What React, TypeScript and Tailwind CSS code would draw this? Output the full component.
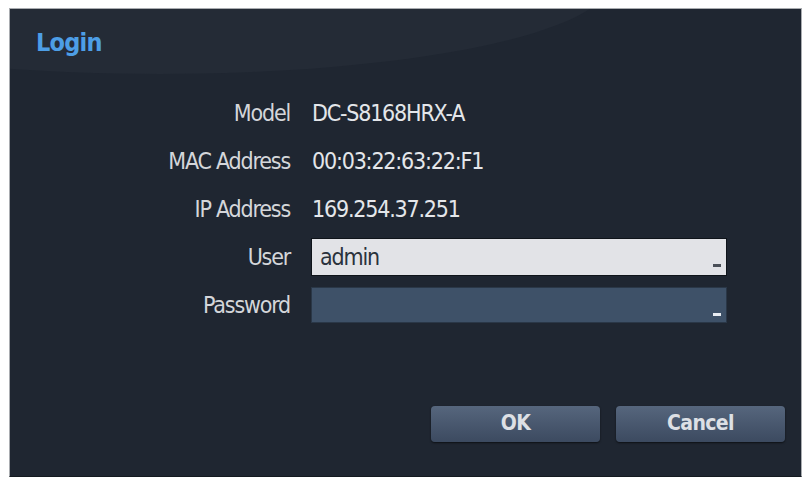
import React from "react";

const font = {
  fontFamily: '"Liberation Sans Narrow", "DejaVu Sans Condensed", "Liberation Sans", sans-serif',
};

function InfoRow({ label, value }: { label: string; value: string }) {
  return (
    <div className="flex h-[48px] items-center">
      <div className="w-[281px] pr-px text-right text-[23px] tracking-[-1.2px] text-[#d4d6da]">{label}</div>
      <div className="pl-[21px] text-[23px] tracking-[-1.2px] text-[#e4e6ea]">{value}</div>
    </div>
  );
}

function Field({ label, value, light }: { label: string; value?: string; light?: boolean }) {
  return (
    <div className="flex h-[48px] items-center">
      <div className="w-[281px] pr-px text-right text-[23px] tracking-[-1.2px] text-[#d4d6da]">{label}</div>
      <div className="pl-[20px]">
        <div
          className={
            light
              ? "relative flex h-[38px] w-[416px] items-center border border-[#0f141a] bg-[#e2e3e7] px-[8px] text-[23px] tracking-[-1.2px] text-[#2a323c]"
              : "relative flex h-[36px] w-[416px] items-center border border-[#2a3747] bg-[#3e5168] px-[8px] text-[23px] tracking-[-1.2px] text-[#e4e6ea]"
          }
        >
          {value}
          <span
            className={
              light
                ? "absolute bottom-[8px] right-[5px] h-[3px] w-[8px] bg-[#4a4f58]"
                : "absolute bottom-[6px] right-[5px] h-[3px] w-[8px] bg-[#e8ecf2]"
            }
          />
        </div>
      </div>
    </div>
  );
}

export default function App() {
  return (
    <div className="h-[486px] w-[810px] bg-white pl-[9px] pt-[8px]" style={font}>
      <div className="relative flex h-[469px] w-[793px] flex-col overflow-hidden border border-[#a9acb0] border-b-[#141a20] bg-[#1f2631]">
        <div className="pointer-events-none absolute left-[-300px] top-[-120px] h-[185px] w-[900px] rounded-[50%] bg-[#242b36]" />
        <div className="relative flex h-[70px] items-center pl-[26px] pb-[2px]">
          <h1 className="text-[25px] font-bold tracking-[-0.8px] text-[#4d9ee6]">Login</h1>
        </div>
        <div className="relative mt-[10px] flex flex-col">
          <InfoRow label="Model" value="DC-S8168HRX-A" />
          <InfoRow label="MAC Address" value="00:03:22:63:22:F1" />
          <InfoRow label="IP Address" value="169.254.37.251" />
          <Field label="User" value="admin" light />
          <Field label="Password" />
        </div>
        <div className="mt-auto mb-[34px] flex justify-end gap-[16px] pr-[16px]">
          <button className="h-[36px] w-[169px] rounded-[4px] bg-gradient-to-b from-[#56667d] to-[#3c4a60] text-[21px] font-bold tracking-[-0.6px] text-[#dde0e5] shadow-[0_1px_2px_rgba(0,0,0,0.6)]">
            OK
          </button>
          <button className="h-[36px] w-[169px] rounded-[4px] bg-gradient-to-b from-[#56667d] to-[#3c4a60] text-[21px] font-bold tracking-[-0.6px] text-[#dde0e5] shadow-[0_1px_2px_rgba(0,0,0,0.6)]">
            Cancel
          </button>
        </div>
      </div>
    </div>
  );
}
